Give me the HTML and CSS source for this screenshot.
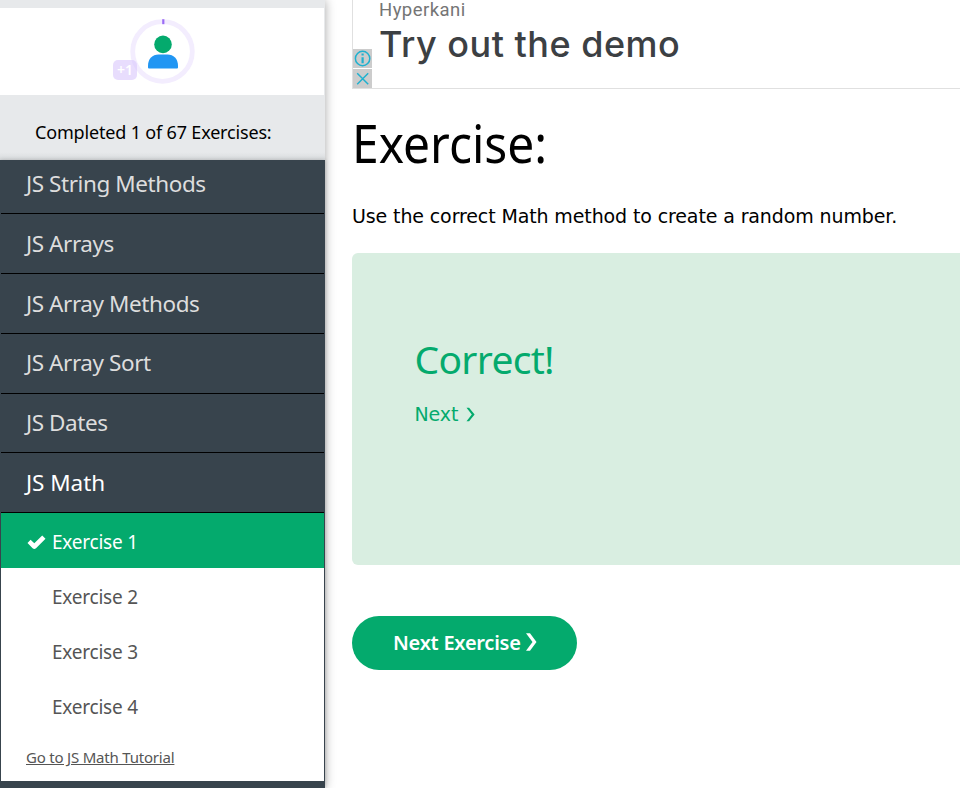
FILE: index.html
```html
<!DOCTYPE html>
<html lang="en">
<head>
<meta charset="utf-8">
<title>JS Exercises</title>
<link rel="stylesheet" href="styles.css">
</head>
<body>
<div class="page">
  <aside class="sidebar">
    <div class="profile">
      <div class="avatar">
        <svg width="66" height="66" viewBox="0 0 66 66">
          <circle cx="32.500" cy="33.500" r="29.8" fill="none" stroke="#f3edfe" stroke-width="4.800"/>
          <path d="M32.200 1.200h2.200v5h-2.200z" fill="#9b6cf5"/>
          <circle cx="33" cy="26.400" r="8.8" fill="#04aa6d"/>
          <path d="M18 49.500v-2c0-6.600 4.500-11 10.500-11h9c6 0 10.500 4.400 10.500 11v2q0 1-1 1H19q-1 0-1-1z" fill="#2196f3"/>
        </svg>
        <span class="plus">+1</span>
      </div>
    </div>
    <div class="completed"><span>Completed 1 of 67 Exercises:</span></div>
    <nav class="menu">
      <a class="topic first"><span>JS String Methods</span></a>
      <a class="topic"><span>JS Arrays</span></a>
      <a class="topic"><span>JS Array Methods</span></a>
      <a class="topic higher"><span>JS Array Sort</span></a>
      <a class="topic short"><span>JS Dates</span></a>
      <a class="topic open"><span>JS Math</span></a>
      <div class="exercises">
        <a class="exercise active">
          <svg class="check" width="19" height="15" viewBox="0 0 19 15"><path d="M.5 7.900 3.600 4.800 7.300 8.200 15.200.6 18.500 3.700 9 13.200q-1.700 1.600-3.400 0z" fill="#fff"/></svg>
          <span>Exercise 1</span></a>
        <a class="exercise"><span>Exercise 2</span></a>
        <a class="exercise"><span>Exercise 3</span></a>
        <a class="exercise"><span>Exercise 4</span></a>
        <a class="tutorial">Go to JS Math Tutorial</a>
      </div>
    </nav>
  </aside>
  <main class="content">
    <section class="ad">
      <div class="ad-icons">
        <svg width="19" height="19" viewBox="0 0 19 19"><path d="M0 0h19v19H0z" fill="#ccc"/><circle cx="9.600" cy="9.500" r="7.200" fill="none" stroke="#1fb1cf" stroke-width="1.500"/><path d="M8.500 8.200h2.200v6H8.500zM8.500 4.500h2.200v2H8.500z" fill="#1fb1cf"/></svg>
        <svg width="19" height="19" viewBox="0 0 19 19"><path d="M0 0h19v19H0z" fill="#ccc"/><path d="m4.200 4.200 11 11M15.200 4.200l-11 11" stroke="#1fb1cf" stroke-width="1.500"/></svg>
      </div>
      <div class="ad-text">
        <div class="brand">Hyperkani</div>
        <div class="slogan">Try out the demo</div>
      </div>
    </section>
    <h1>Exercise:</h1>
    <p class="task">Use the correct Math method to create a random number.</p>
    <section class="result">
      <h2>Correct!</h2>
      <a class="next">Next <svg width="9" height="15" viewBox="0 0 9 15"><path d="M.5.7h2.600L8.600 7.500 3.100 14.300H.5L5.800 7.500z" fill="#04aa6d"/></svg></a>
    </section>
    <a class="button">Next Exercise <svg width="11" height="18" viewBox="0 0 11 18"><path d="M0 .3h4L10.500 9 4 17.700H0L6.500 9z" fill="#fff"/></svg></a>
  </main>
</div>
</body>
</html>
```
FILE: styles.css
```css
* { box-sizing: border-box; }
body { margin: 0; background: #fff; color: #000; font-family: "Noto Sans", sans-serif; }
.page { display: flex; height: 788px; overflow: hidden; }

.sidebar { width: 325px; flex: none; background: #e7e9eb; padding-top: 8px; box-shadow: 0 0 10px rgba(0, 0, 0, .35); display: flex; flex-direction: column; }
.profile { height: 87px; width: 324px; flex: none; background: #fff; padding: 10px 0 0 130px; }
.avatar { position: relative; width: 66px; height: 66px; }
.avatar svg { display: block; }
.plus { position: absolute; left: -17px; top: 42px; width: 24px; height: 20px; border-radius: 5px; background: rgba(217, 199, 252, .6); color: #fff; font-size: 14px; font-weight: 600; line-height: 20px; text-align: center; }
.completed { height: 65px; flex: none; padding-left: 35px; font-size: 18px; line-height: 74px; letter-spacing: -.17px; background: linear-gradient(#e7e9eb 88%, #d8dbdd); overflow: hidden; white-space: nowrap; }

.menu { flex: 1; background: #38444d; padding: 0 1px; box-shadow: 0 0 4px rgba(0, 0, 0, .2); }
.topic { display: block; height: 60px; border-bottom: 1px solid #000; padding-left: 25px; color: #ddd; font-size: 22.5px; line-height: 59px; letter-spacing: -.42px; }
.first { height: 54px; line-height: 48px; }
.higher { line-height: 57px; }
.short { height: 59px; line-height: 57px; }
.open { color: #fff; letter-spacing: -.05px; }
.exercises { background: #fff; height: 268px; }
.exercise { display: flex; align-items: center; height: 55px; padding: 3px 0 0 51px; font-size: 19px; letter-spacing: -.22px; color: #555; }
.active { background: #04aa6d; color: #fff; padding-left: 26px; }
.check { margin: 1px 6px 0 0; }
.tutorial { display: block; padding-left: 25px; font-size: 15px; line-height: 48px; letter-spacing: -.2px; color: #555; text-decoration: underline; }

.content { flex: 1; min-width: 0; padding-left: 27px; }
.ad { height: 89px; border-left: 1px solid #e0e0e0; border-bottom: 1px solid #e0e0e0; display: flex; }
.ad-icons { width: 26px; padding-top: 49px; display: flex; flex-direction: column; gap: 1px; }
.brand { font: 18.5px/21px Roboto, sans-serif; letter-spacing: .45px; color: #757575; }
.slogan { font: 500 36px/47px Inter, sans-serif; letter-spacing: .5px; color: #3c4043; white-space: nowrap; }
h1 { margin: 18px 0 0; font-size: 52px; line-height: 72px; font-weight: 400; transform: scaleX(.922); transform-origin: left; }
.task { margin: 25px 0 0; font: 19px/24px "DejaVu Sans", sans-serif; letter-spacing: -.12px; white-space: nowrap; }
.result { margin-top: 25px; height: 312px; background: #d9eee1; border-radius: 6px 0 0 6px; padding: 79px 0 0 62.5px; color: #04aa6d; }
h2 { margin: 0; font-size: 39px; line-height: 54px; font-weight: 400; letter-spacing: -.7px; }
.next { display: flex; align-items: center; gap: 7.5px; margin-top: 16px; font: 19px/24px "DejaVu Sans", sans-serif; letter-spacing: -.1px; }
.button { display: flex; align-items: center; width: 225px; height: 54px; margin-top: 51px; padding: 0 0 2px 41px; gap: 5px; border-radius: 27px; background: #04aa6d; color: #fff; font-size: 20px; font-weight: 600; letter-spacing: -.25px; white-space: nowrap; }
```
